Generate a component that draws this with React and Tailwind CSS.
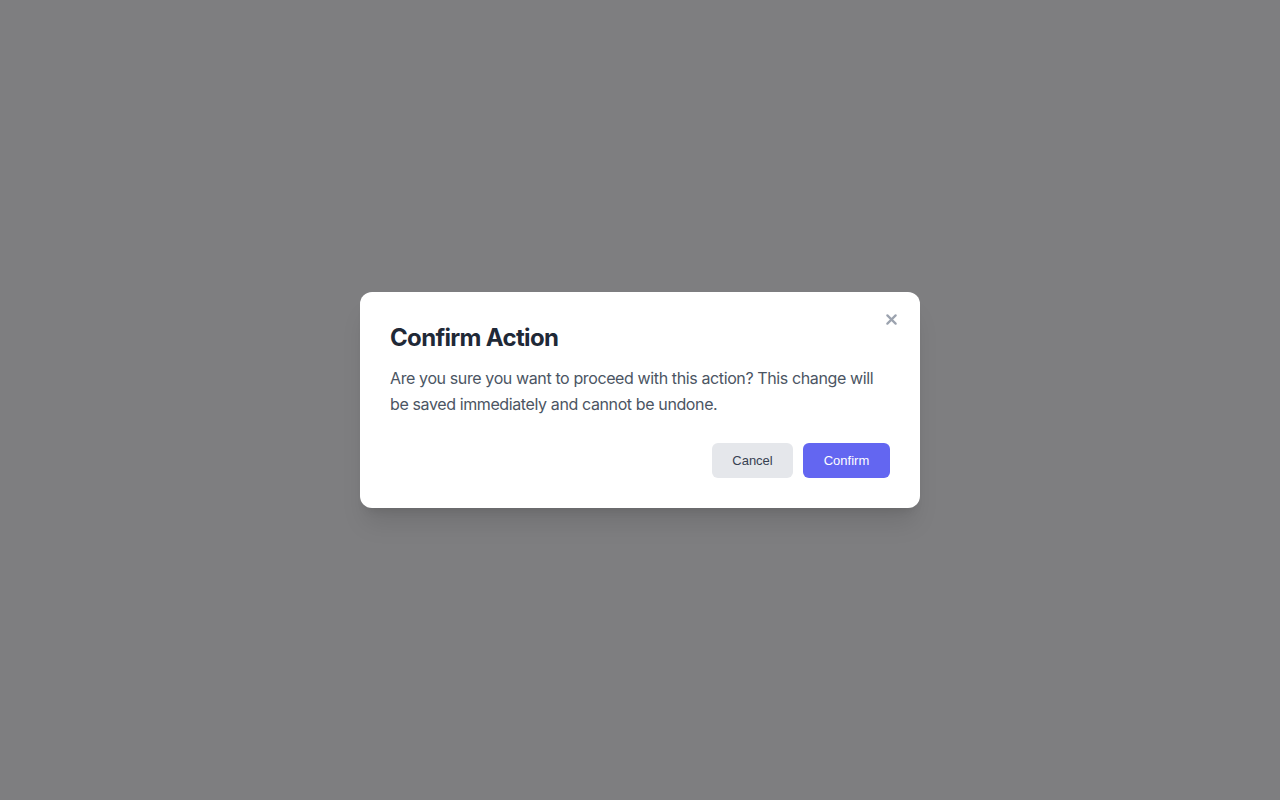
export default function App() {
  return (
    <div className="flex h-[800px] w-full items-center justify-center bg-[#7e7e80] font-['Inter',sans-serif]">
      <div className="relative w-[560px] rounded-xl bg-white p-[30px] shadow-xl">
        <button className="absolute right-[17px] top-[15px] flex h-6 w-6 items-center justify-center text-[#9ca3af]">
          <svg width="11" height="11" viewBox="0 0 12 12" fill="none" stroke="currentColor" strokeWidth="2.4" strokeLinecap="round">
            <path d="M1.5 1.5l9 9M10.5 1.5l-9 9" />
          </svg>
        </button>
        <h2 className="text-2xl leading-8 font-bold tracking-[-0.028em] text-[#1f2937]">Confirm Action</h2>
        <p className="mt-[11px] text-base leading-[26px] tracking-[-0.024em] text-[#4b5563]">
          Are you sure you want to proceed with this action? This change will be saved immediately and cannot be undone.
        </p>
        <div className="mt-[26px] flex justify-end gap-[10px] font-['Liberation_Sans',Arial,sans-serif] text-[13px]">
          <button className="h-[35px] w-[81px] rounded-md bg-[#e5e7eb] text-[#374151]">Cancel</button>
          <button className="h-[35px] w-[87px] rounded-md bg-[#6366f1] text-white">Confirm</button>
        </div>
      </div>
    </div>
  );
}
